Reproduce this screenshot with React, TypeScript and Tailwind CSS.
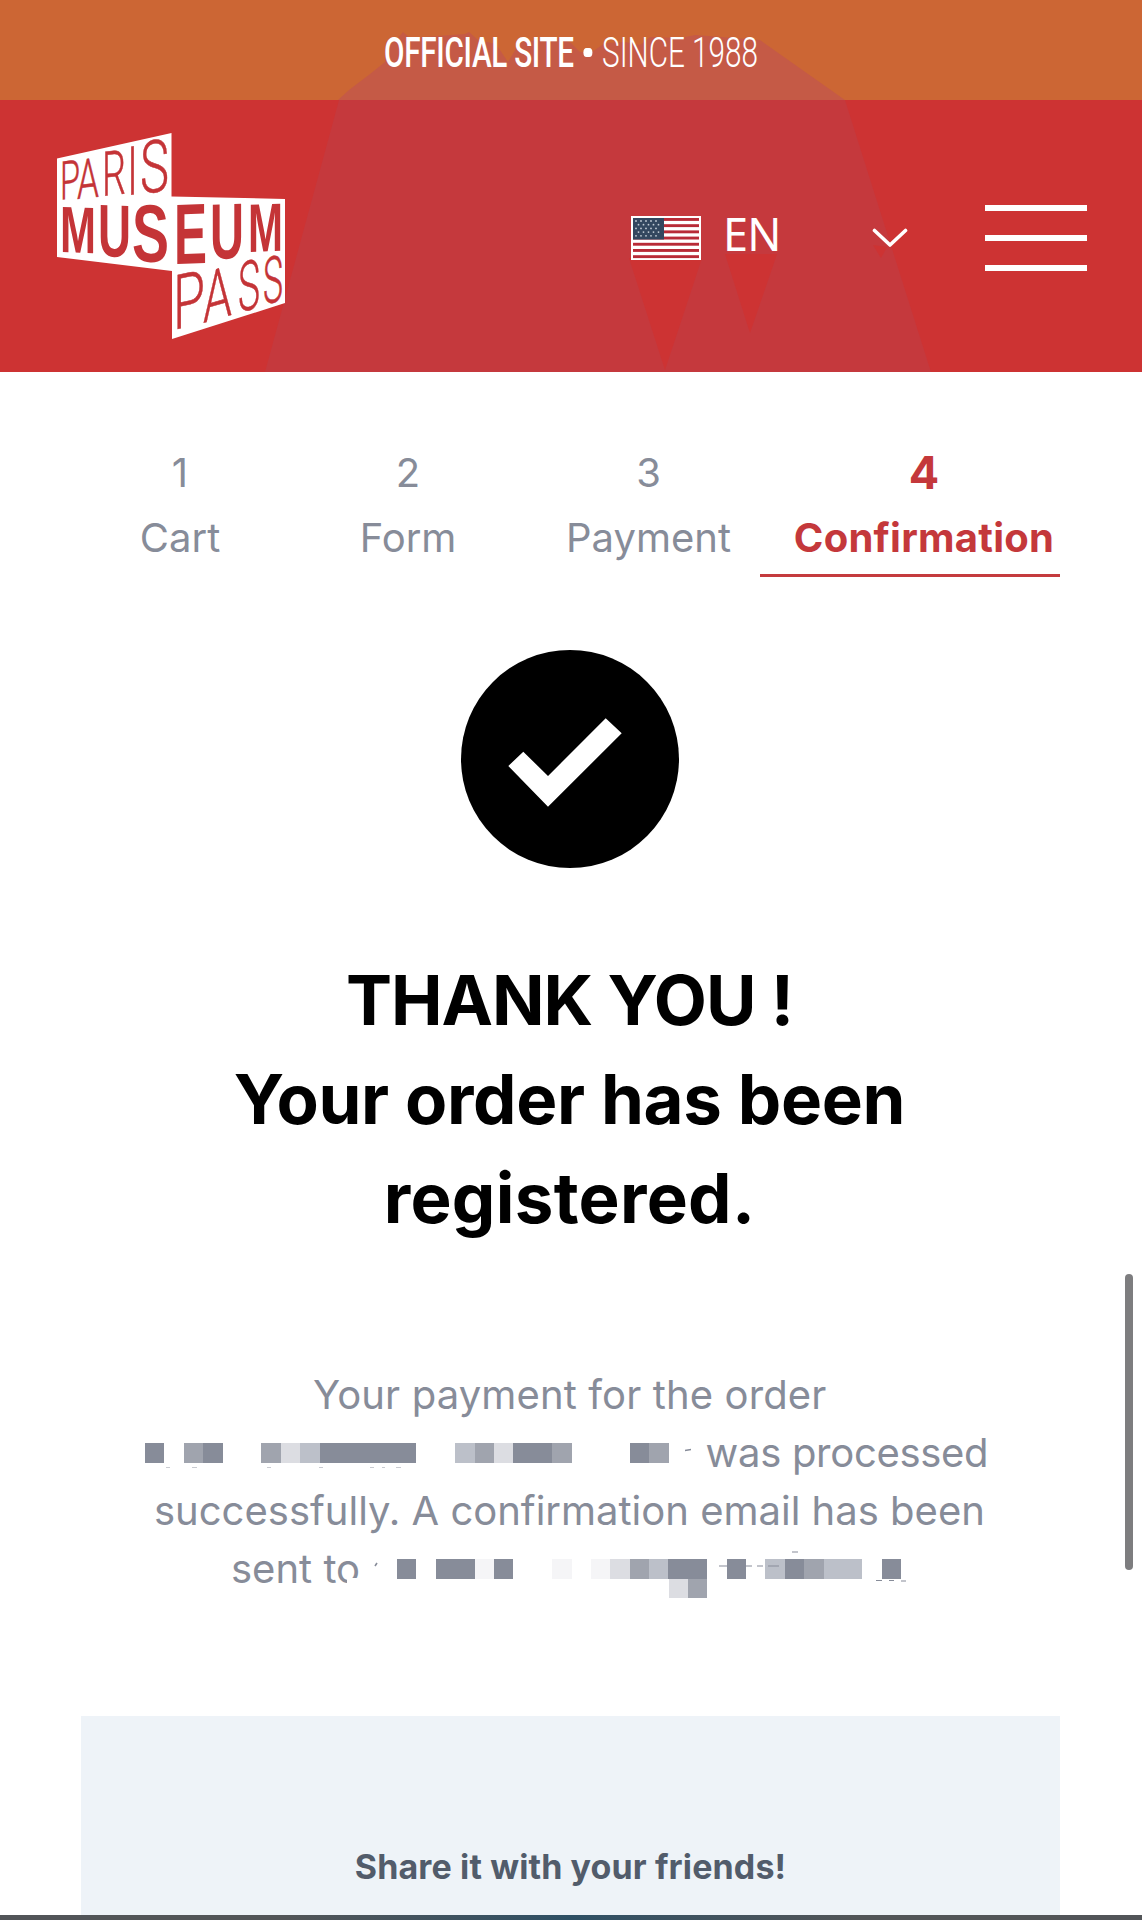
import type { ReactNode } from 'react';

const STEPS = [
  { number: 1, label: 'Cart', className: 'w-[180px]' },
  { number: 2, label: 'Form', className: 'w-[276px]' },
  { number: 3, label: 'Payment', className: 'w-[205px]' },
];

// x, top, baseline, width, slope in degrees
type Glyph = [string, number, number, number, number, number];

const THIN_GLYPHS: Glyph[] = [
  ['P', 60, 162, 200, 20, -8],
  ['A', 77, 160, 199, 22, -6],
  ['R', 102, 152, 196, 24, -6],
  ['I', 127, 147, 195, 11, -5],
  ['S', 140, 142, 194, 29, -7],
  ['P', 173, 276, 330, 32, -12],
  ['A', 203, 273, 323, 29, -16],
  ['S', 238, 264, 313, 22, -16],
  ['S', 263, 259, 305, 20, -14],
];

const BOLD_GLYPHS: Glyph[] = [
  ['M', 60, 206, 252, 36, 2],
  ['U', 98, 204, 256, 33, 2],
  ['S', 132, 204, 261, 37, 2],
  ['E', 174, 204, 264, 33, -2],
  ['U', 210, 204, 259, 34, -2],
  ['M', 248, 204, 252, 35, -2],
];

function LogoGlyphs({ glyphs, className, capHeight }: { glyphs: Glyph[]; className: string; capHeight: number }) {
  return (
    <g className={className} fill="#c43437">
      {glyphs.map(([char, x, top, baseline, width, slope], i) => (
        <text
          key={i}
          transform={`translate(${x} ${baseline}) skewY(${slope})`}
          fontSize={(baseline - top) / capHeight}
          textLength={width}
          lengthAdjust="spacingAndGlyphs"
        >
          {char}
        </text>
      ))}
    </g>
  );
}

function Logo() {
  return (
    <svg viewBox="57 133 228 206" className="h-[206px] w-[228px] overflow-visible" role="img" aria-label="Paris Museum Pass">
      <path d="M57 158.500L171.500 133V196.500L285 199V303L172 339V271L57 257Z" fill="#fff" />
      <LogoGlyphs glyphs={THIN_GLYPHS} className="stroke-[#c43437] stroke-[0.5px] font-[Roboto] font-light" capHeight={0.711} />
      <LogoGlyphs glyphs={BOLD_GLYPHS} className="font-['Liberation_Sans'] font-bold" capHeight={0.7} />
    </svg>
  );
}

function Flag() {
  return (
    <svg viewBox="0 0 70 44" className="h-[44px] w-[70px]">
      <rect width="70" height="44" fill="#fff" />
      {[2, 8.2, 14.4, 20.6, 26.8, 33, 39.2].map((y) => (
        <rect key={y} x="2" y={y} width="66" height="2.9" fill="#b82b37" />
      ))}
      <rect x="2" y="2" width="31" height="21.500" fill="#33475f" />
      {[5, 8.7, 12.4, 16.1, 19.8].map((y, row) =>
        [5, 10, 15, 20, 25].map((x) => (
          <circle key={`${x}-${y}`} cx={x + (row % 2) * 2.5} cy={y} r="0.9" fill="#c3ccd6" />
        ))
      )}
    </svg>
  );
}

function Header() {
  return (
    <header className="relative">
      <div className="h-[100px] bg-[#cc6634]" />
      <div className="h-[272px] bg-[#cd3333]" />

      {/* Louvre pyramid silhouette */}
      <svg viewBox="0 0 1142 372" className="absolute inset-0 h-[372px] w-[1142px]">
        <path
          d="M338 100L349 90L370 74L385 62L386 42L398 38L403 32L410 38L465 34L469 32L478 40L496 44L508 62L520 42L560 38L571 43L580 52L592 52L605 43L625 42L640 45L650 37L680 38L695 35L760 40L845 100Z"
          fill="#c55a46"
        />
        <path d="M339 100H845L931 372H265Z" fill="#c5393d" />
        <path d="M629 258H702L665 370ZM725 254H777L750 333ZM873 245L887 247L881 258Z" fill="#cd3333" />
      </svg>

      <div className="absolute inset-x-0 top-0 flex h-[100px] items-center justify-center pt-[5px]">
        <p className="scale-x-[0.69] whitespace-nowrap font-[Roboto] text-[43px] leading-none text-white">
          <span className="font-medium tracking-[-0.4px]">OFFICIAL SITE</span>
          <span className="mx-[14px] inline-block h-[9px] w-[13px] translate-y-[-10px] rounded-full bg-white" />
          <span className="font-light">SINCE 1988</span>
        </p>
      </div>

      <div className="absolute inset-x-0 top-[100px] flex h-[272px] items-start pl-[57px] pt-[33px]">
        <Logo />
        <button className="ml-[346px] mt-[72px] flex items-center text-white">
          <span className="mt-[8px]">
            <Flag />
          </span>
          <span className="ml-[22px] mt-px font-['Noto_Sans'] text-[45px] leading-[56px] tracking-[-0.8px]">EN</span>
          <svg viewBox="0 0 36 20" className="ml-[91px] mt-[8px] h-[20px] w-[36px]">
            <path d="M2.500 2.500L18 17L33.500 2.500" fill="none" stroke="#fff" strokeWidth="3.600" strokeLinecap="round" strokeLinejoin="round" />
          </svg>
        </button>
        <button className="ml-auto mr-[55px] mt-[72px] flex w-[102px] flex-col gap-[24px]">
          <span className="h-[6px] bg-white" />
          <span className="h-[6px] bg-white" />
          <span className="h-[6px] bg-white" />
        </button>
      </div>
    </header>
  );
}

function Steps() {
  return (
    <nav className="flex h-[206px] pl-[90px] pr-[82px] pt-[68px] text-center text-[40px] leading-[65px] text-[#878c99]">
      {STEPS.map((step) => (
        <div key={step.number} className={step.className}>
          <p>{step.number}</p>
          <p>{step.label}</p>
        </div>
      ))}
      <div className="ml-[9px] h-[137px] w-[300px] border-b-[3px] border-[#c43b3e] pl-[28px] font-bold text-[#c4383b]">
        <p className="text-[45px]">4</p>
        <p className="tracking-[0.250px]">Confirmation</p>
      </div>
    </nav>
  );
}

const SHADES = ['', 'bg-[#f5f5f7]', 'bg-[#dcdde2]', 'bg-[#bcc0c9]', 'bg-[#a0a4ae]', 'bg-[#878c99]'];

// Each digit is the shade of one block
function Redacted({ blocks, className = '' }: { blocks: string; className?: string }) {
  return (
    <span className={`flex ${className}`}>
      {blocks.split('').map((shade, i) => (
        <span key={i} className={`h-[19.500px] w-[19.400px] ${SHADES[Number(shade)]}`} />
      ))}
    </span>
  );
}

// Bits of letters left around the blocks
function Fragments() {
  return (
    <svg viewBox="0 0 1142 232" className="absolute inset-0 h-[232px] w-[1142px]">
      <path d="M347 212H364V226H347Z" fill="#fff" />
      <path d="M685 84.500L691 83.500M375 200L377 197" stroke="#878c99" strokeWidth="1.600" />
      <path
        d="M719 200H731M746 200H752M757 200H763M768 200H779M792 186H798M876 214.500H882M889 214.500H894M901 215H906"
        stroke="#878c99"
        strokeWidth="1.200"
      />
      <path d="M166 101.500H170M192 101.500H197M267 101.500H271M319 101.500H323M370 101.500H374M382 101.500H385M396 101.500H401" stroke="#c9cbd1" />
    </svg>
  );
}

function Line({ className = '', children }: { className?: string; children: ReactNode }) {
  return <p className={`flex h-[58px] items-center whitespace-nowrap ${className}`}>{children}</p>;
}

export default function App() {
  return (
    <div className="relative flex h-[1920px] w-[1142px] flex-col overflow-hidden bg-white font-[Inter]">
      <Header />
      <Steps />

      <main className="flex flex-col">
        <svg viewBox="0 0 218 218" className="ml-[461px] mt-[72px] h-[218px] w-[218px]">
          <circle cx="109" cy="109" r="109" />
          <path d="M47.300 116L62.300 101.700L87 126L144.700 68.300L160.700 83.300L87 156.700Z" fill="#fff" />
        </svg>

        <h1 className="mt-[83px] pr-[3px] text-center text-[69px] font-bold leading-[99px] text-black">
          <span className="tracking-[-1.050px]">THANK YOU !</span>
          <br />
          <span className="tracking-[-0.300px]">Your order has been</span>
          <br />
          <span className="tracking-[0.300px]">registered.</span>
        </h1>

        <div className="relative mt-[118px] text-[40px] text-[#878c99]">
          <Line className="pl-[313px] tracking-[0.130px]">Your payment for the order</Line>
          <Line className="pl-[145px]">
            <Redacted blocks="504500423555550034255400054" />
            <span className="ml-[37px] tracking-[-0.300px]">was processed</span>
          </Line>
          <Line className="pl-[154px]">successfully. A confirmation email has been</Line>
          <Line className="pl-[231px]">
            <span className="w-[166px]">sent to</span>
            <span className="relative">
              <Redacted blocks="50551500101243550503543305" />
              <Redacted blocks="24" className="absolute left-[271.600px] top-full" />
            </span>
          </Line>
          <Fragments />
        </div>
      </main>

      <section className="ml-[81px] mt-[118px] h-[204px] w-[979px] shrink-0 bg-[#eef3f8] pt-[126px] text-center text-[34px] font-bold leading-[50px] tracking-[0.120px] text-[#525c6b]">
        Share it with your friends!
      </section>

      <div className="absolute inset-x-0 bottom-0 h-[5px] bg-linear-to-r from-[#525558] from-25% via-[#2e5065] to-[#525558] to-75%" />
      <div className="absolute right-[9px] top-[1274px] h-[296px] w-[8px] rounded-full bg-[#7d7d7f]" />
    </div>
  );
}
